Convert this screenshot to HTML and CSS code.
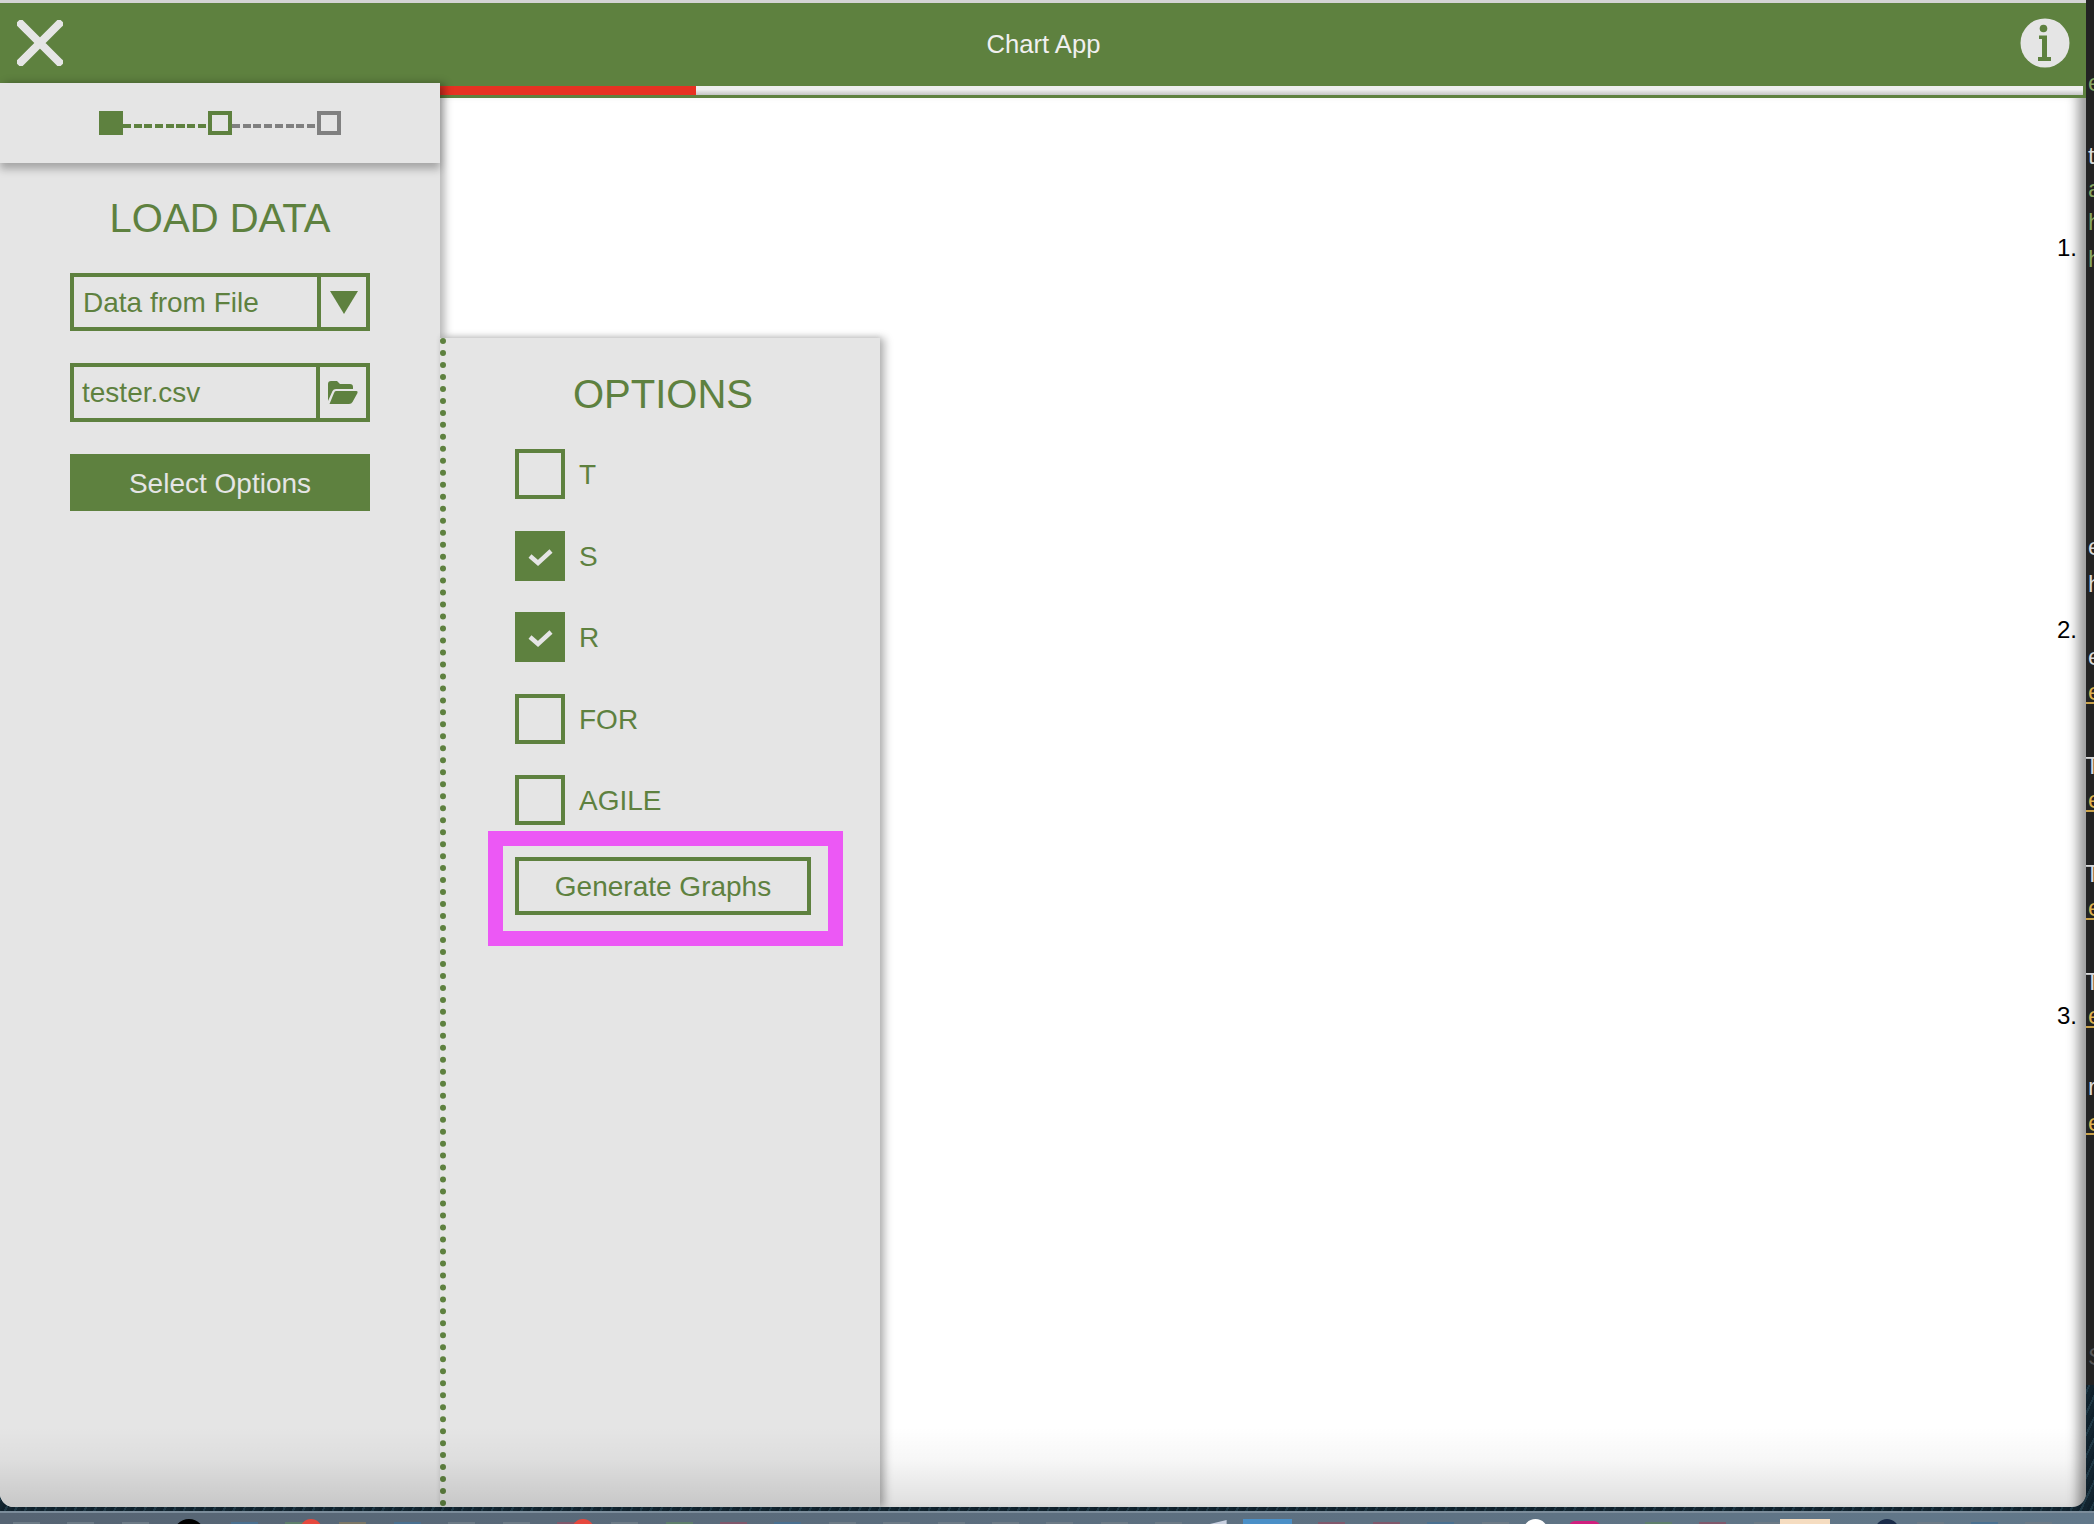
FILE: index.html
```html
<!DOCTYPE html>
<html lang="en">
<head>
  <meta charset="UTF-8">
  <meta name="viewport" content="width=device-width, initial-scale=1.0">
  <title>Chart App</title>
  <link rel="stylesheet" href="styles.css">
</head>
<body>

  <div class="desktop">
    <div class="window">
      <header class="titlebar">
        <svg class="close-icon" width="46" height="46" viewBox="0 0 46 46">
          <path d="M4 4 L42 42 M42 4 L4 42" />
        </svg>
        <span class="app-title">Chart App</span>
        <svg class="info-icon" width="50" height="50" viewBox="0 0 50 50">
          <circle cx="25" cy="25" r="24.5" fill="#e5e5e5" />
          <circle cx="23.5" cy="10.5" r="3.8" fill="#5e813f" />
          <path d="M19 17.5 H27 V39 H31 V43 H18 V39 H22 V21 H19 Z" fill="#5e813f" />
        </svg>
      </header>

      <div class="workspace">
        <aside class="sidebar">
          <div class="steps">
            <span class="step step-done"></span>
            <span class="dashes"></span>
            <span class="step step-current"></span>
            <span class="dashes dashes-off"></span>
            <span class="step step-off"></span>
          </div>
          <div class="load-form">
            <h2 class="panel-title">LOAD DATA</h2>
            <div class="field">
              <span class="field-text">Data from File</span>
              <span class="field-btn">
                <svg width="28" height="23" viewBox="0 0 28 23"><polygon points="0,0 28,0 14,23" fill="#5e813f" /></svg>
              </span>
            </div>
            <div class="field field-file">
              <span class="field-text">tester.csv</span>
              <span class="field-btn">
                <svg width="30" height="23" viewBox="0 0 30 23">
                  <path d="M0 3 Q0 0 3 0 H9 L12 3 H22 Q25 3 25 6 V8 H8 Q5.5 8 4.5 10 L0 20 Z" fill="#5e813f" />
                  <path d="M8 10 H28.5 Q30 10 29.5 12 L24.5 21 Q23.5 23 21 23 H1.5 L6 12 Q6.7 10 8 10 Z" fill="#5e813f" />
                </svg>
              </span>
            </div>
            <button class="btn-solid">Select Options</button>
          </div>
        </aside>

        <main class="content">
          <div class="progress"><div class="progress-track"><div class="progress-fill"></div></div></div>
          <div class="content-body">
            <section class="options">
              <h2 class="panel-title">OPTIONS</h2>
              <div class="option-list">
                <label class="option"><span class="check"></span>T</label>
                <label class="option">
                  <span class="check check-on"><svg width="42" height="42" viewBox="0 0 42 42"><polyline points="11,21 19,28 32,16" /></svg></span>S
                </label>
                <label class="option">
                  <span class="check check-on"><svg width="42" height="42" viewBox="0 0 42 42"><polyline points="11,21 19,28 32,16" /></svg></span>R
                </label>
                <label class="option"><span class="check"></span>FOR</label>
                <label class="option"><span class="check"></span>AGILE</label>
              </div>
              <div class="highlight">
                <button class="btn-outline">Generate Graphs</button>
              </div>
            </section>
            <div class="numbers">
              <div class="num">1.</div>
              <div class="num num-second">2.</div>
              <div class="num num-third">3.</div>
            </div>
          </div>
        </main>
      </div>
    </div>

    <div class="code-strip">
      <div class="code-lines">
        <div class="line green">e</div>
        <div class="line light gap-xl">t</div>
        <div class="line green gap-xs">a</div>
        <div class="line green gap-xs">h</div>
        <div class="line green gap-s">h</div>
        <div class="line light gap-top">e</div>
        <div class="line light gap-s">h</div>
        <div class="line light gap-xl">e</div>
        <div class="line gold gap-s">e</div>
        <div class="line light tee gap-l">T</div>
        <div class="line gold gap-t">e</div>
        <div class="line light tee gap-l">T</div>
        <div class="line gold gap-t">e</div>
        <div class="line light tee gap-l">T</div>
        <div class="line gold gap-t">e</div>
        <div class="line light gap-xl">r</div>
        <div class="line gold gap-r">e</div>
        <div class="line muted gap-end">S</div>
      </div>
    </div>
  </div>

  <div class="dock">
    <span class="dock-item"><i></i></span>
    <span class="dock-item"><i></i></span>
    <span class="dock-item"><i></i></span>
    <span class="dock-item"><i class="dot-black"></i></span>
    <span class="dock-item"><i class="tint-blue"></i></span>
    <span class="dock-item"><i class="tint-green"></i><b class="badge"></b></span>
    <span class="dock-item"><i class="tint-brown"></i></span>
    <span class="dock-item"><i class="tint-blue"></i></span>
    <span class="dock-item"><i></i></span>
    <span class="dock-item"><i></i></span>
    <span class="dock-item"><i class="tint-red"></i><b class="badge"></b></span>
    <span class="dock-item"><i></i></span>
    <span class="dock-item"><i class="tint-green"></i></span>
    <span class="dock-item"><i class="tint-red"></i></span>
    <span class="dock-item"><i class="tint-blue"></i></span>
    <span class="dock-item"><i></i></span>
    <span class="dock-item"><i></i></span>
    <span class="dock-item"><i></i></span>
    <span class="dock-item"><i></i></span>
    <span class="dock-item"><i></i></span>
    <span class="dock-item"><i></i></span>
    <span class="dock-item"><i></i></span>
    <span class="dock-item"><i class="plane"></i></span>
    <span class="dock-item"><i class="box-blue"></i></span>
    <span class="dock-item"><i class="tint-red"></i></span>
    <span class="dock-item"><i class="tint-red"></i></span>
    <span class="dock-item"><i class="tint-blue"></i></span>
    <span class="dock-item"><i></i></span>
    <span class="dock-item"><i class="dot-white"></i></span>
    <span class="dock-item"><i class="dot-pink"></i></span>
    <span class="dock-item"><i class="tint-green"></i></span>
    <span class="dock-item"><i class="tint-red"></i></span>
    <span class="dock-item"><i></i></span>
    <span class="dock-item"><i class="box-peach"></i></span>
    <span class="dock-item"><i class="dot-navy"></i></span>
    <span class="dock-item"><i></i></span>
    <span class="dock-item"><i class="tint-blue"></i></span>
    <span class="dock-item"><i></i></span>
  </div>

</body>
</html>
```

FILE: styles.css
```css
* { box-sizing: border-box; }
html, body { margin: 0; height: 100%; }
body { width: 2094px; height: 1524px; overflow: hidden; background: #12242f; background-image: repeating-linear-gradient(115deg, #0f202b 0 3px, #1f3845 3px 5px, #12242f 5px 9px); font-family: "Liberation Sans", Arial, Helvetica, sans-serif; color: #5e813f; }

.desktop { display: flex; height: 1507px; }

/* main window */
.window { position: relative; width: 2086px; height: 1507px; display: flex; flex-direction: column; overflow: hidden; background: #fff; border-top: 3px solid #d4d4d4; border-radius: 0 0 14px 14px; }
.window::after { content: ""; position: absolute; z-index: 3; left: 0; right: 0; bottom: 0; height: 80px; background: linear-gradient(rgba(0,0,0,0), rgba(0,0,0,.03) 40%, rgba(0,0,0,.13)); pointer-events: none; }

.titlebar { flex: none; height: 80px; display: flex; align-items: center; justify-content: space-between; padding: 0 16px 0 17px; background: #5e813f; }
.close-icon path { stroke: #e5e5e5; stroke-width: 8; fill: none; stroke-linecap: square; }
.app-title { font-size: 25.6px; color: #f0f0f0; margin-left: 4px; padding-top: 2px; }

.workspace { flex: 1; display: flex; min-height: 0; }

/* left panel */
.sidebar { position: relative; z-index: 1; flex: none; width: 440px; background: #e5e5e5; box-shadow: 5px 0 8px rgba(0,0,0,.28); }
.steps { position: relative; height: 80px; display: flex; align-items: center; justify-content: center; background: #e5e5e5; box-shadow: 0 6px 8px rgba(0,0,0,.28); }
.step { width: 24px; height: 24px; border: 4px solid #5e813f; }
.step-done { background: #5e813f; }
.step-off { border-color: #808080; }
.dashes { width: 85px; height: 4px; margin-top: 5px; background: repeating-linear-gradient(90deg, #5e813f 0 8px, transparent 8px 10.7px); }
.dashes-off { background: repeating-linear-gradient(90deg, #808080 0 8px, transparent 8px 10.7px); }

.load-form { padding: 32px 70px 0; }
.panel-title { margin: 0 0 32px; font-size: 40px; line-height: 46px; font-weight: normal; text-align: center; }

.field { height: 58px; margin-bottom: 32px; display: flex; border: 4px solid #5e813f; font-size: 28px; }
.field-file { height: 59px; margin-bottom: 32px; }
.field-text { flex: 1; align-self: center; padding: 2px 0 0 9px; }
.field-btn { width: 49px; flex: none; display: flex; align-items: center; justify-content: center; border-left: 4px solid #5e813f; }
.field-file .field-btn { width: 50px; }
.field-file .field-text { padding: 0 0 0 8px; }

.btn-solid { display: block; width: 300px; height: 57px; padding: 2px 0 0; border: 0; background: #5e813f; color: #e5e5e5; font: inherit; font-size: 28px; }

/* right of the sidebar */
.content { flex: 1; display: flex; flex-direction: column; min-width: 0; }
.progress { flex: none; height: 15px; padding: 3px 3px 3px 0; background: #5e813f; }
.progress-track { height: 9px; background: linear-gradient(#eee 40%, #c4c4c4); }
.progress-fill { width: 256px; height: 9px; background: #e63222; }

.content-body { flex: 1; display: flex; justify-content: space-between; padding-right: 9px; box-shadow: inset -16px 0 12px -8px rgba(0,0,0,.4); }

.options { position: relative; z-index: 2; width: 440px; margin-top: 240px; padding: 33px 69px 0; background: #e5e5e5; border-left: 6px dotted #5e813f; box-shadow: 5px 0 8px rgba(0,0,0,.28), 0 -2px 5px rgba(0,0,0,.08); }

.option-list { display: flex; flex-direction: column; gap: 31.5px; }
.option { display: flex; align-items: center; gap: 14px; height: 50px; padding-top: 2px; font-size: 28px; }
.check { width: 50px; height: 50px; flex: none; margin-top: -2px; border: 4px solid #5e813f; }
.check-on { background: #5e813f; }
.check svg { display: block; }
.check polyline { fill: none; stroke: #e5e5e5; stroke-width: 4.5; }

.highlight { width: 355px; margin: 6px 0 0 -27px; padding: 11px 17px 16px 12px; border: 15px solid #ec58f5; }
.btn-outline { display: block; width: 296px; height: 58px; padding: 2px 0 0; border: 4px solid #5e813f; background: transparent; color: #5e813f; font: inherit; font-size: 28px; }

.numbers { padding-top: 136px; font-size: 24px; line-height: 28px; color: #000; }
.num-second { margin-top: 354px; }
.num-third { margin-top: 358px; }

/* window behind, only a sliver shows */
.code-strip { width: 8px; height: 1385px; overflow: hidden; background: #232323; }
.code-lines { padding-top: 69px; font-size: 24px; }
.line { height: 28px; line-height: 28px; padding-left: 2px; white-space: nowrap; }
.green { color: #86a562; }
.light { color: #d8d8d8; }
.muted { color: #555; }
.gold { height: 24px; line-height: 24px; color: #dcb04e; border-bottom: 2px solid #c9a24a; }
.tee { padding-left: 0; text-indent: -1px; }
.gap-xs { margin-top: 5px; }
.gap-t { margin-top: 8px; }
.gap-s { margin-top: 9px; }
.gap-r { margin-top: 10px; }
.gap-xl { margin-top: 45px; }
.gap-l { margin-top: 48px; }
.gap-top { margin-top: 260px; }
.gap-end { margin-top: 208px; }

/* dock at the bottom */
.dock { display: flex; height: 13px; margin-top: 4px; padding-left: 13px; overflow: hidden; background: linear-gradient(90deg, #566473, #62788a); border-top: 2px solid #7b8c9a; }
.dock-item { position: relative; flex: none; width: 54.4px; height: 11px; }
.dock-item i { position: absolute; left: 0; top: 9px; width: 27px; height: 4px; background: #6c7a86; }
.dock-item .tint-blue { background: #4a7090; }
.dock-item .tint-green { background: #5f7f6c; }
.dock-item .tint-red { background: #80586c; }
.dock-item .tint-brown { background: #7c7766; }
.dock-item .dot-black { top: 6px; left: -3px; width: 32px; height: 32px; border-radius: 50%; background: #000; }
.dock-item .dot-white { top: 6px; left: -13px; width: 25px; height: 25px; border-radius: 50%; background: #fff; }
.dock-item .dot-pink { top: 8px; left: -21px; width: 31px; height: 10px; border-radius: 6px 6px 0 0; background: #d01f7e; }
.dock-item .dot-navy { top: 6px; left: 13px; width: 24px; height: 24px; border-radius: 50%; background: #1a2c4a; }
.dock-item .box-blue { top: 6px; left: -21px; width: 49px; height: 10px; background: #4a8fc7; }
.dock-item .box-peach { top: 6px; left: -28px; width: 50px; height: 10px; background: #f5dcc0; }
.dock-item .plane { top: 7px; left: -8px; width: 25px; height: 6px; background: #c8d0e0; clip-path: polygon(0 100%, 100% 0, 100% 100%); }
.badge { position: absolute; left: 15px; top: 6px; width: 22px; height: 22px; border-radius: 50%; background: #e6483d; }
```
